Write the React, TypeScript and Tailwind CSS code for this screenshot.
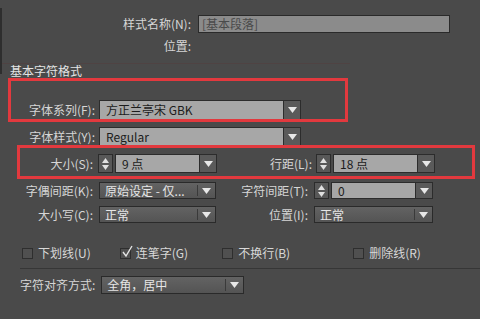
import React from "react";

const font = { fontFamily: '"Noto Sans CJK SC", "Noto Sans", sans-serif' };

function Arrow() {
  return (
    <svg width="9" height="6" viewBox="0 0 9 6">
      <path d="M0 0 L9 0 L4.5 6 Z" fill="#e8e8e8" />
    </svg>
  );
}

function Spinner() {
  return (
    <div className="flex h-full w-[15px] flex-col items-center justify-center gap-[2px] border border-[#2c2c2c] bg-[#585858]">
      <svg width="7" height="5" viewBox="0 0 7 5"><path d="M0 5 L7 5 L3.5 0 Z" fill="#e0e0e0" /></svg>
      <svg width="7" height="5" viewBox="0 0 7 5"><path d="M0 0 L7 0 L3.5 5 Z" fill="#e0e0e0" /></svg>
    </div>
  );
}

function LightCombo({ text, width }: { text: string; width: string }) {
  return (
    <div className={`flex h-full ${width}`}>
      <div className="flex flex-1 items-center border border-[#2c2c2c] bg-[#a7a7a7] pl-[6px] text-[12px] text-[#1c1c1c]">
        {text}
      </div>
      <div className="flex w-[17px] items-center justify-center border border-l-0 border-[#2c2c2c] bg-[#5a5a5a]">
        <Arrow />
      </div>
    </div>
  );
}

function DarkCombo({ text, width }: { text: string; width: string }) {
  return (
    <div className={`flex h-full ${width} border border-[#2a2a2a] bg-gradient-to-b from-[#636363] to-[#545454]`}>
      <div className="flex flex-1 items-center pl-[5px] text-[12px] text-[#e6e6e6]">{text}</div>
      <div className="my-[2px] w-px bg-[#3a3a3a]" />
      <div className="flex w-[17px] items-center justify-center">
        <Arrow />
      </div>
    </div>
  );
}

function Check({ label, checked, ml }: { label: string; checked?: boolean; ml: string }) {
  return (
    <div className={`flex items-center ${ml}`}>
      <div className="relative h-[11px] w-[11px] border border-[#2e2e2e] bg-[#505050]">
        {checked && (
          <svg className="absolute left-[1px] top-[-4px]" width="11" height="13" viewBox="0 0 11 13">
            <path d="M1 7 L4 11 L10 1" stroke="#e4e4e4" strokeWidth="1.4" fill="none" />
          </svg>
        )}
      </div>
      <span className="ml-[5px] text-[12px] text-[#d8d8d8]">{label}</span>
    </div>
  );
}

export default function App() {
  return (
    <div className="relative h-[319px] w-[480px] overflow-hidden bg-[#4a4a4a] text-[#d6d6d6]" style={font}>
      <div className="absolute left-0 top-[8px] h-[66px] w-[2px] bg-[#2e2e2e]" />
      <div className="flex flex-col pt-[15px]">
        <div className="flex h-[18px] items-center">
          <div className="w-[191px] text-right text-[12px]">样式名称(N):</div>
          <div className="ml-[7px] flex h-full w-[252px] items-center border border-[#2a2a2a] bg-[#8b8b8b] pl-[3px] text-[12px] text-[#4a4a4a]">
            [基本段落]
          </div>
        </div>
        <div className="mt-[5px] flex h-[16px] items-center">
          <div className="w-[191px] text-right text-[12px]">位置:</div>
        </div>
        <div className="mt-[9px] h-px w-[350px] bg-[#4f4343]" />
        <div className="flex h-[14px] items-center pl-[10px] text-[12px] text-[#e4e4e4]">基本字符格式</div>

        <div className="mt-[22px] flex h-[20px] items-center">
          <div className="w-[95px] text-right text-[12px]">字体系列(F):</div>
          <div className="ml-[4px] h-full">
            <LightCombo text="方正兰亭宋 GBK" width="w-[202px]" />
          </div>
        </div>

        <div className="mt-[7px] flex h-[19px] items-center">
          <div className="w-[95px] text-right text-[12px]">字体样式(Y):</div>
          <div className="ml-[4px] h-full">
            <LightCombo text="Regular" width="w-[202px]" />
          </div>
        </div>

        <div className="mt-[8px] flex h-[19px] items-center">
          <div className="w-[93px] text-right text-[12px]">大小(S):</div>
          <div className="ml-[5px] flex h-full gap-[2px]">
            <Spinner />
            <LightCombo text="9 点" width="w-[102px]" />
          </div>
          <div className="w-[95px] text-right text-[12px]">行距(L):</div>
          <div className="ml-[4px] flex h-full gap-[2px]">
            <Spinner />
            <LightCombo text="18 点" width="w-[102px]" />
          </div>
        </div>

        <div className="mt-[9px] flex h-[17px] items-center">
          <div className="w-[93px] text-right text-[12px]">字偶间距(K):</div>
          <div className="ml-[6px] h-full">
            <DarkCombo text="原始设定 - 仅..." width="w-[117px]" />
          </div>
          <div className="w-[92px] text-right text-[12px]">字符间距(T):</div>
          <div className="ml-[6px] flex h-full gap-[2px]">
            <Spinner />
            <LightCombo text="0" width="w-[102px]" />
          </div>
        </div>

        <div className="mt-[7px] flex h-[17px] items-center">
          <div className="w-[93px] text-right text-[12px]">大小写(C):</div>
          <div className="ml-[6px] h-full">
            <DarkCombo text="正常" width="w-[117px]" />
          </div>
          <div className="w-[92px] text-right text-[12px]">位置(I):</div>
          <div className="ml-[6px] h-full">
            <DarkCombo text="正常" width="w-[119px]" />
          </div>
        </div>

        <div className="mt-[23px] flex h-[14px] items-center">
          <Check label="下划线(U)" ml="ml-[22px]" />
          <Check label="连笔字(G)" checked ml="ml-[29px]" />
          <Check label="不换行(B)" ml="ml-[34px]" />
          <Check label="删除线(R)" ml="ml-[63px]" />
        </div>

        <div className="ml-[20px] mt-[8px] h-px bg-[#363636]" />

        <div className="mt-[7px] flex h-[18px] items-center">
          <div className="ml-[20px] text-[12px]">字符对齐方式:</div>
          <div className="ml-[6px] h-full">
            <DarkCombo text="全角，居中" width="w-[143px]" />
          </div>
        </div>
      </div>

      <div className="pointer-events-none absolute left-[8px] top-[78px] h-[44px] w-[340px] border-[3px] border-[#e2393e]" />
      <div className="pointer-events-none absolute left-[17px] top-[145px] h-[34px] w-[458px] border-[3px] border-[#e2393e]" />
    </div>
  );
}
